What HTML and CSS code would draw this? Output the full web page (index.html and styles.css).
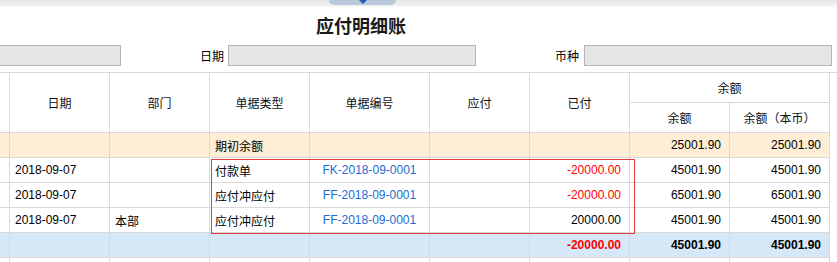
FILE: index.html
```html
<!DOCTYPE html>
<html lang="zh-CN">
<head>
<meta charset="utf-8">
<title>应付明细账</title>
<link rel="stylesheet" href="styles.css">
</head>
<body>
<div class="topbar">
  <div class="tab"><span class="caret"></span></div>
</div>
<h1 class="title">应付明细账</h1>
<div class="filters">
  <div class="field field-first"></div>
  <label class="lbl lbl-date">日期</label>
  <div class="field"></div>
  <label class="lbl lbl-cur">币种</label>
  <div class="field"></div>
</div>
<div class="grid-wrap">
  <table class="grid">
    <colgroup>
      <col class="c-edge"><col class="c-std"><col class="c-std"><col class="c-std"><col class="c-wide"><col class="c-std"><col class="c-std"><col class="c-std"><col class="c-std">
    </colgroup>
    <thead>
      <tr class="hr">
        <th rowspan="2"></th>
        <th rowspan="2">日期</th>
        <th rowspan="2">部门</th>
        <th rowspan="2">单据类型</th>
        <th rowspan="2">单据编号</th>
        <th rowspan="2">应付</th>
        <th rowspan="2">已付</th>
        <th colspan="2">余额</th>
      </tr>
      <tr class="hr">
        <th>余额</th>
        <th>余额（本币）</th>
      </tr>
    </thead>
    <tbody>
      <tr class="row opening">
        <td></td><td></td><td></td><td class="l">期初余额</td><td></td><td></td><td></td><td class="r">25001.90</td><td class="r">25001.90</td>
      </tr>
      <tr class="row">
        <td></td><td class="l">2018-09-07</td><td></td><td class="l">付款单</td><td class="c link">FK-2018-09-0001</td><td></td><td class="r neg">-20000.00</td><td class="r">45001.90</td><td class="r">45001.90</td>
      </tr>
      <tr class="row">
        <td></td><td class="l">2018-09-07</td><td></td><td class="l">应付冲应付</td><td class="c link">FF-2018-09-0001</td><td></td><td class="r neg">-20000.00</td><td class="r">65001.90</td><td class="r">65001.90</td>
      </tr>
      <tr class="row">
        <td></td><td class="l">2018-09-07</td><td class="l">本部</td><td class="l">应付冲应付</td><td class="c link">FF-2018-09-0001</td><td></td><td class="r">20000.00</td><td class="r">45001.90</td><td class="r">45001.90</td>
      </tr>
      <tr class="row total">
        <td></td><td></td><td></td><td></td><td></td><td></td><td class="r neg">-20000.00</td><td class="r">45001.90</td><td class="r">45001.90</td>
      </tr>
      <tr class="row">
        <td></td><td></td><td></td><td></td><td></td><td></td><td></td><td></td><td></td>
      </tr>
    </tbody>
  </table>
  <div class="highlight"></div>
</div>
</body>
</html>
```

FILE: styles.css
```css
html, body {
  margin: 0;
  padding: 0;
  background: #ffffff;
  overflow: hidden;
}
body {
  width: 837px;
  height: 262px;
  font-family: "Liberation Sans", "Noto Sans CJK SC", sans-serif;
  font-size: 12px;
  color: #000;
}
.topbar {
  height: 7px;
  background: linear-gradient(#e6e6e6, #f6f6f6);
  display: flex;
  padding-left: 329px;
}
.tab {
  width: 67px;
  height: 5px;
  background: #b9c8db;
  border-radius: 0 0 6px 6px;
  display: flex;
  justify-content: center;
}
.caret {
  width: 0;
  height: 0;
  border-left: 4px solid transparent;
  border-right: 4px solid transparent;
  border-top: 4px solid #1f5fb4;
}
.title {
  margin: 0;
  height: 38px;
  line-height: 36px;
  padding-left: 316px;
  font-family: "Noto Sans CJK SC", sans-serif;
  font-size: 18px;
  font-weight: bold;
  color: #1a1a1a;
}
.filters {
  display: flex;
  align-items: center;
  height: 21px;
}
.field {
  box-sizing: border-box;
  width: 248px;
  height: 21px;
  background: #e6e6e6;
  border: 1px solid #b4b4b4;
}
.field-first {
  width: 123px;
  margin-left: -2px;
}
.lbl {
  font-family: "Noto Sans CJK SC", sans-serif;
  font-size: 12px;
  line-height: 21px;
  color: #000;
}
.lbl-date {
  margin-left: 79px;
  margin-right: 4px;
}
.lbl-cur {
  margin-left: 79px;
  margin-right: 5px;
}
.grid-wrap {
  position: relative;
  margin-top: 6px;
  height: 189px;
  overflow: hidden;
  border-top: 1px solid #d9d9d9;
}
.grid {
  table-layout: fixed;
  border-collapse: separate;
  border-spacing: 0;
  width: 830px;
}
.c-edge { width: 10px; }
.c-std { width: 100px; }
.c-wide { width: 120px; }
.grid th,
.grid td {
  box-sizing: border-box;
  padding: 0;
  border-right: 1px solid #d9d9d9;
  border-bottom: 1px solid #d9d9d9;
  white-space: nowrap;
  overflow: hidden;
  vertical-align: middle;
}
.grid th {
  font-family: "Noto Sans CJK SC", sans-serif;
  font-weight: normal;
  font-size: 12px;
  text-align: center;
  color: #111;
}
.hr { height: 30px; }
.row { height: 25px; }
.grid td.l { text-align: left; padding-left: 5px; }
.grid td.r { text-align: right; padding-right: 8px; }
.grid td.c { text-align: center; }
.link { color: #1c6bd3; }
.neg { color: #ff0000; }
.opening td { background: #fdeed5; }
.total td { background: #d6e8f7; font-weight: bold; }
.highlight {
  position: absolute;
  left: 211px;
  top: 86px;
  width: 424px;
  height: 75px;
  box-sizing: border-box;
  border: 1px solid #e5393a;
  pointer-events: none;
}
```
